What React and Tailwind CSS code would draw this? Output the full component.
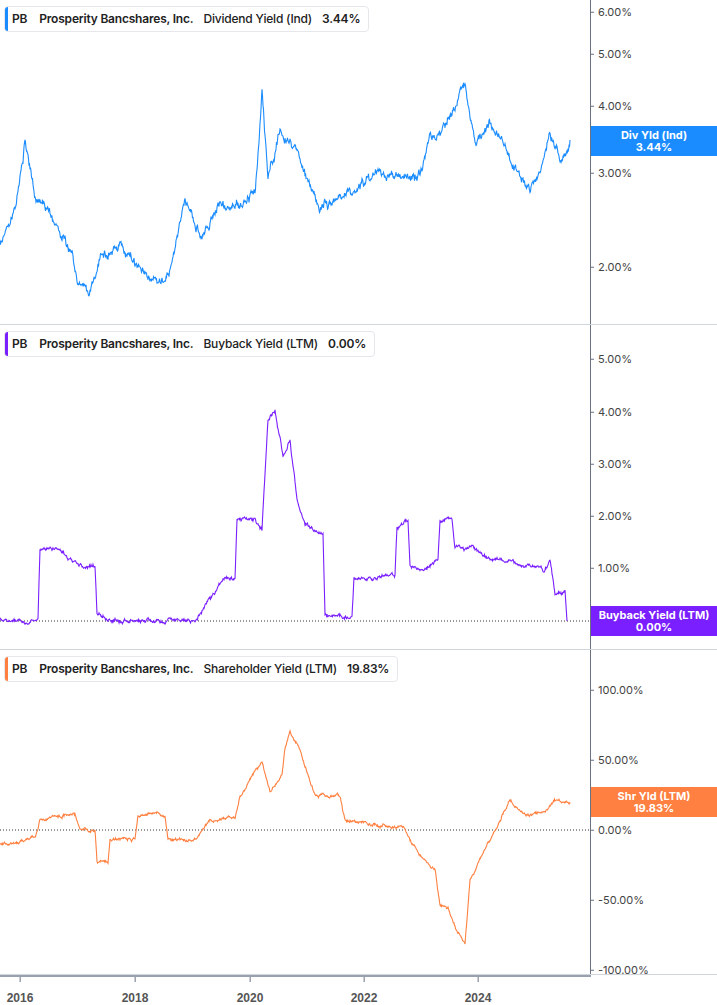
import React from "react";

// seeded noise so the lines look the same every run
const rng = (seed) => () => {
  seed = (seed * 16807) % 2147483647;
  return seed / 2147483647 - 0.5;
};

const buildPath = (keys, top, noise, seed) => {
  const r = rng(seed);
  const pts = [];
  let walk = 0;
  for (let i = 0; i < keys.length - 1; i++) {
    const [x0, y0] = keys[i];
    const [x1, y1] = keys[i + 1];
    const n = Math.max(1, Math.round((x1 - x0) * 2));
    for (let j = 0; j < n; j++) {
      const t = j / n;
      walk = walk * 0.85 + r() * noise;
      pts.push([x0 + (x1 - x0) * t, y0 + (y1 - y0) * t + walk + r() * noise * 0.6]);
    }
  }
  const last = keys[keys.length - 1];
  pts.push(last);
  return pts.map((p, i) => `${i ? "L" : "M"}${p[0].toFixed(1)},${(p[1] - top).toFixed(1)}`).join(" ");
};

const panels = [
  {
    top: 0,
    color: "#1a8cff",
    metric: "Dividend Yield (Ind)",
    value: "3.44%",
    badge: ["Div Yld (Ind)", "3.44%"],
    badgeY: 126,
    noise: 6,
    labels: [["6.00%", 12], ["5.00%", 54], ["4.00%", 106], ["3.00%", 173], ["2.00%", 267]],
    keys: [[0,245],[15,215],[25,140],[35,200],[50,215],[65,240],[80,280],[90,292],[100,255],[120,245],[140,270],[150,280],[170,270],[185,200],[200,235],[220,205],[240,205],[255,195],[262,95],[268,180],[280,130],[295,145],[305,175],[320,205],[340,195],[360,185],[380,170],[400,175],[420,175],[430,135],[445,125],[460,100],[465,85],[475,140],[490,125],[505,140],[515,165],[530,190],[540,175],[550,130],[560,160],[570,140]],
  },
  {
    top: 325,
    color: "#7a1fff",
    metric: "Buyback Yield (LTM)",
    value: "0.00%",
    badge: ["Buyback Yield (LTM)", "0.00%"],
    badgeY: 606,
    noise: 2.5,
    zero: 621,
    labels: [["5.00%", 359], ["4.00%", 412], ["3.00%", 464], ["2.00%", 516], ["1.00%", 568]],
    keys: [[0,621],[38,621],[40,550],[55,548],[70,560],[90,568],[95,565],[97,612],[110,621],[195,621],[225,578],[235,578],[237,518],[255,520],[262,530],[268,420],[275,410],[283,455],[290,440],[297,500],[305,525],[320,535],[323,535],[325,616],[352,616],[354,580],[395,575],[397,528],[408,522],[410,568],[425,570],[438,560],[440,520],[452,520],[455,550],[470,548],[490,558],[520,565],[545,570],[550,558],[555,592],[565,592],[567,621]],
  },
  {
    top: 650,
    color: "#ff8040",
    metric: "Shareholder Yield (LTM)",
    value: "19.83%",
    badge: ["Shr Yld (LTM)", "19.83%"],
    badgeY: 787,
    noise: 2,
    zero: 830,
    labels: [["100.00%", 690], ["50.00%", 760], ["0.00%", 830], ["-50.00%", 900], ["-100.00%", 970]],
    keys: [[0,845],[35,838],[40,820],[55,815],[75,815],[80,830],[95,830],[97,862],[108,862],[110,838],[135,838],[138,815],[165,815],[168,840],[195,840],[210,820],[235,815],[240,798],[255,770],[262,762],[270,790],[282,775],[285,750],[290,732],[300,750],[315,795],[340,797],[345,820],[365,824],[395,826],[405,828],[410,840],[425,860],[435,870],[440,905],[448,908],[455,925],[465,945],[470,880],[480,860],[495,830],[510,800],[525,815],[545,812],[555,800],[570,802]],
  },
];

const years = [["2016", 20], ["2018", 135], ["2020", 250], ["2022", 364], ["2024", 478]];

const Panel = ({ p, i }) => (
  <div className="relative flex h-[325px] border-b border-gray-300">
    <div className="relative w-[591px] border-r border-gray-500">
      <svg className="absolute inset-0" width="591" height="325">
        {p.zero && (
          <line x1="0" x2="591" y1={p.zero - p.top} y2={p.zero - p.top} stroke="#333" strokeWidth="1" strokeDasharray="1 2" />
        )}
        <path d={buildPath(p.keys, p.top, p.noise, 17 + i * 31)} fill="none" stroke={p.color} strokeWidth="1.1" />
      </svg>
      <div className="absolute left-[4px] top-[6px] flex items-center gap-[10px] rounded-sm border border-gray-200 bg-white py-[3px] pl-[7px] pr-[8px] text-[12px] font-semibold tracking-[-0.2px] text-[#222]">
        <span className="absolute left-0 top-0 h-full w-[3px] rounded-l-sm" style={{ background: p.color }} />
        <span>PB</span>
        <span className="ml-[2px]">Prosperity Bancshares, Inc.</span>
        <span className="font-medium">{p.metric}</span>
        <span>{p.value}</span>
      </div>
    </div>
    <div className="relative flex-1">
      {p.labels.map(([t, y]) => (
        <div key={t} className="absolute left-0 flex -translate-y-1/2 items-center gap-[4px] text-[11px] text-[#444]" style={{ top: y - p.top }}>
          <span className="h-px w-[3px] bg-gray-500" />
          <span>{t}</span>
        </div>
      ))}
      <div
        className="absolute left-0 right-0 flex h-[30px] flex-col items-center justify-center text-[11px] font-bold leading-[12px] text-white"
        style={{ top: p.badgeY - p.top, background: p.color }}
      >
        <span>{p.badge[0]}</span>
        <span>{p.badge[1]}</span>
      </div>
    </div>
  </div>
);

export default function App() {
  return (
    <div className="h-[1005px] w-[717px] bg-white" style={{ fontFamily: "Inter, 'Liberation Sans', sans-serif" }}>
      {panels.map((p, i) => (
        <Panel key={i} p={p} i={i} />
      ))}
      <div className="relative h-[30px] w-[591px] border-t-2 border-gray-400">
        {years.map(([y, x]) => (
          <div key={y} className="absolute top-0 flex -translate-x-1/2 flex-col items-center" style={{ left: x }}>
            <span className="h-[5px] w-px bg-gray-500" />
            <span className="mt-[7px] text-[12px] font-bold text-[#555]" style={{ fontFamily: "'Liberation Sans', sans-serif" }}>{y}</span>
          </div>
        ))}
      </div>
    </div>
  );
}
